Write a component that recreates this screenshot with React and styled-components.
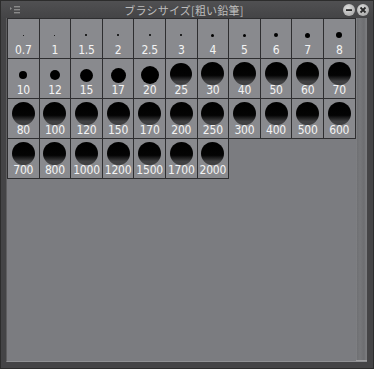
import React from 'react'
import styled, { createGlobalStyle } from 'styled-components'

const GlobalStyle = createGlobalStyle`
  html, body {
    margin: 0;
    padding: 0;
    background: #3a3a3a;
  }
`

// label, dot diameter in px
const sizes = [
  ['0.7', 1], ['1', 1], ['1.5', 2], ['2', 2], ['2.5', 2], ['3', 2],
  ['4', 3], ['5', 3], ['6', 4], ['7', 5], ['8', 6],
  ['10', 8], ['12', 10], ['15', 13], ['17', 15], ['20', 18], ['25', 22],
  ['30', 23], ['40', 23], ['50', 23], ['60', 23], ['70', 23],
  ['80', 23], ['100', 23], ['120', 23], ['150', 23], ['170', 23], ['200', 23],
  ['250', 23], ['300', 23], ['400', 23], ['500', 23], ['600', 23],
  ['700', 23], ['800', 23], ['1000', 23], ['1200', 23], ['1500', 23],
  ['1700', 23], ['2000', 23],
]

const Window = styled.div`
  width: 374px;
  height: 369px;
  display: flex;
  flex-direction: column;
  background: #444446;
  box-sizing: border-box;
  border: 1px solid #2c2c2c;
  overflow: hidden;
`

const TitleBar = styled.div`
  height: 17px;
  flex-shrink: 0;
  display: flex;
  align-items: center;
  padding: 0 4px 0 8px;
  background: linear-gradient(#505052, #444446);
  font-family: 'Noto Sans CJK JP', 'DejaVu Sans', sans-serif;
  font-size: 11px;
  color: #bcbcbc;
`

const Title = styled.div`
  flex: 1;
  text-align: center;
  letter-spacing: 0.2px;
  padding-left: 4px;
`

const TitleButtons = styled.div`
  display: flex;
  gap: 2px;
  margin-top: 1px;
`

const RoundButton = styled.div`
  width: 12px;
  height: 12px;
  border-radius: 50%;
  background: radial-gradient(circle at 40% 35%, #dedede, #9c9c9c);
  display: flex;
  align-items: center;
  justify-content: center;
`

const Body = styled.div`
  flex: 1;
  display: flex;
  padding: 0 6px 6px 5px;
`

const Panel = styled.div`
  flex: 1;
  display: flex;
  border-left: 1px solid #5e5e60;
  border-bottom: 1px solid #909194;
  background: #7b7c80;
`

const GridArea = styled.div`
  flex: 1;
`

const Grid = styled.div`
  display: grid;
  grid-template-columns: repeat(11, 31.6px);
  grid-auto-rows: 40px;
  border-top: 1px solid #2e2e30;
  border-left: 1px solid #2e2e30;
  width: fit-content;
`

const Cell = styled.div`
  box-sizing: border-box;
  background: #898a8e;
  border-right: 1px solid #2e2e30;
  border-bottom: 1px solid #2e2e30;
  position: relative;
  display: flex;
  flex-direction: column;
  align-items: center;
`

const DotBox = styled.div`
  height: 32px;
  display: flex;
  align-items: center;
  justify-content: center;
  width: 100%;
`

const Dot = styled.div`
  border-radius: 50%;
  background: ${({ $big }) =>
    $big ? 'linear-gradient(#000 0%, #040404 58%, #404042 84%)' : '#000'};
  margin-top: ${({ $big }) => ($big ? '-3px' : '0')};
`

const Label = styled.div`
  position: absolute;
  left: 0;
  right: 0;
  top: 24px;
  text-align: center;
  font-family: 'DejaVu Sans Condensed', 'Liberation Sans Narrow', sans-serif;
  font-size: 12px;
  line-height: 14px;
  color: #f4f4f4;
  letter-spacing: -0.2px;
`

const Scrollbar = styled.div`
  width: 11px;
  background: linear-gradient(90deg, #8c8d90 0px, #6f7073 1px, #76777a 4px, #6d6e71 8px, #7a7b7e 10px);
  border-bottom: 1px solid #a0a0a2;
`

const MenuIcon = () => (
  <svg width="12" height="10" viewBox="0 0 12 10">
    <path d="M1 2 L3 3.5 L1 5 Z" fill="#8a8a8a" />
    <rect x="5" y="1" width="6" height="1.4" fill="#8a8a8a" />
    <rect x="5" y="4" width="6" height="1.4" fill="#8a8a8a" />
    <rect x="5" y="7" width="6" height="1.4" fill="#8a8a8a" />
  </svg>
)

export default function App() {
  return (
    <>
      <GlobalStyle />
      <Window>
        <TitleBar>
          <MenuIcon />
          <Title>ブラシサイズ[粗い鉛筆]</Title>
          <TitleButtons>
            <RoundButton>
              <svg width="8" height="8" viewBox="0 0 8 8">
                <rect x="1" y="3.2" width="6" height="1.8" fill="#2a2a2a" />
              </svg>
            </RoundButton>
            <RoundButton>
              <svg width="8" height="8" viewBox="0 0 8 8">
                <path d="M1.5 1.5 L6.5 6.5 M6.5 1.5 L1.5 6.5" stroke="#2a2a2a" strokeWidth="1.8" />
              </svg>
            </RoundButton>
          </TitleButtons>
        </TitleBar>
        <Body>
          <Panel>
            <GridArea>
              <Grid>
                {sizes.map(([label, d]) => (
                  <Cell key={label}>
                    <DotBox>
                      <Dot $big={d >= 20} style={{ width: d, height: d }} />
                    </DotBox>
                    <Label>{label}</Label>
                  </Cell>
                ))}
              </Grid>
            </GridArea>
            <Scrollbar />
          </Panel>
        </Body>
      </Window>
    </>
  )
}
